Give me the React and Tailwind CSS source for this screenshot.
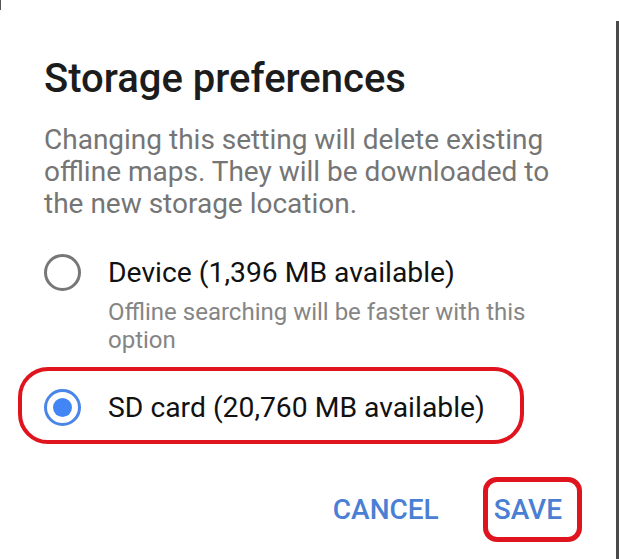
import React from "react";

const Radio = ({ checked }) => (
  <div
    className={`size-[37px] shrink-0 rounded-full border-[3px] flex items-center justify-center ${
      checked ? "border-[#4a86e8]" : "border-[#777777]"
    }`}
  >
    {checked && <div className="size-[19px] rounded-full bg-[#4285f4]" />}
  </div>
);

export default function App() {
  return (
    <div className="relative w-[619px] h-[559px] bg-white overflow-hidden font-['Roboto',sans-serif]">
      {/* device edge on the right */}
      <div className="absolute right-0 top-[21px] bottom-0 w-[3px] bg-[#4a4a4a]" />
      <div className="absolute left-0 top-0 w-px h-[10px] bg-[#555]" />

      <div className="pl-[44px] pt-[57px]">
        <h1 className="text-[40px] leading-[44px] font-medium text-[#1c1c1c]">
          Storage preferences
        </h1>
        <p className="mt-[23px] max-w-[530px] text-[28px] leading-[32px] text-[#757575]">
          Changing this setting will delete existing offline maps. They will be downloaded to the new storage location.
        </p>

        <div className="mt-[37px] flex items-start gap-[27px]">
          <div className="mt-[-3px]">
            <Radio />
          </div>
          <div>
            <div className="text-[28.3px] leading-[32px] text-[#111]">Device (1,396 MB available)</div>
            <div className="mt-[9px] max-w-[430px] text-[24px] leading-[28px] text-[#858585]">
              Offline searching will be faster with this option
            </div>
          </div>
        </div>

        <div className="mt-[35px] flex items-center gap-[27px]">
          <Radio checked />
          <div className="text-[28.3px] leading-[32px] text-[#111]">SD card (20,760 MB available)</div>
        </div>

        <div className="mt-[68px] flex justify-end gap-[55px] pr-[57px]">
          <button className="text-[28px] leading-[32px] font-medium text-[#4a7fd4]">CANCEL</button>
          <button className="text-[28px] leading-[32px] font-medium text-[#4a7fd4]">SAVE</button>
        </div>
      </div>

      {/* red annotations */}
      <div className="absolute left-[18px] top-[367px] w-[506px] h-[77px] border-[4px] border-[#e0141e] rounded-[30px]" />
      <div className="absolute left-[483px] top-[477px] w-[99px] h-[65px] border-[5px] border-[#e0141e] rounded-[14px]" />
    </div>
  );
}
